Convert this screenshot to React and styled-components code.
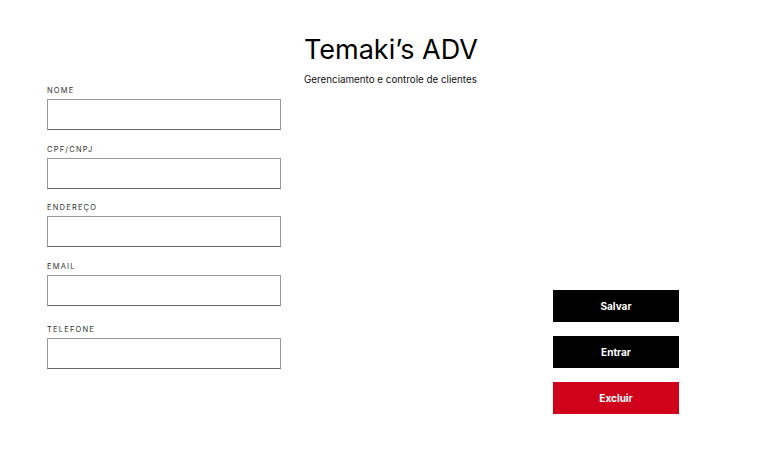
import React from "react";
import styled, { createGlobalStyle } from "styled-components";

const fields = [
  { label: "NOME" },
  { label: "CPF/CNPJ" },
  { label: "ENDEREÇO" },
  { label: "EMAIL" },
  { label: "TELEFONE", spaced: true },
];

const App = () => {
  return (
    <>
      <GlobalStyle />
      <Page>
        <Header>
          <Title>Temaki’s ADV</Title>
          <Subtitle>Gerenciamento e controle de clientes</Subtitle>
        </Header>
        <Main>
          <Form>
            {fields.map((f) => (
              <Field key={f.label} spaced={f.spaced}>
                <Label>{f.label}</Label>
                <Input type="text" />
              </Field>
            ))}
          </Form>
          <Actions>
            <Button>Salvar</Button>
            <Button>Entrar</Button>
            <Button danger>Excluir</Button>
          </Actions>
        </Main>
      </Page>
    </>
  );
};

const GlobalStyle = createGlobalStyle`
  body {
    margin: 0;
    background: #fff;
    font-family: Inter, "Noto Sans", sans-serif;
  }
`;

const Page = styled.div`
  width: 781px;
  height: 453px;
  box-sizing: border-box;
  padding-top: 31px;
`;

const Header = styled.header`
  width: 173px;
  margin: 0 auto;
`;

const Title = styled.h1`
  margin: 0;
  font-size: 27px;
  font-weight: 400;
  line-height: 38px;
  color: #000;
  white-space: nowrap;
`;

const Subtitle = styled.p`
  margin: 5px 0 0;
  font-size: 9.8px;
  line-height: 12px;
  color: #111;
  white-space: nowrap;
`;

const Main = styled.div`
  display: flex;
  justify-content: space-between;
  padding: 0 102px 0 47px;
`;

const Form = styled.form`
  display: flex;
  flex-direction: column;
  gap: 14.6px;
`;

const Field = styled.div`
  display: flex;
  flex-direction: column;
  gap: 4px;
  margin-top: ${(p) => (p.spaced ? "5px" : "0")};
`;

const Label = styled.label`
  font-size: 7.5px;
  letter-spacing: 1.2px;
  color: #333;
  line-height: 9px;
`;

const Input = styled.input`
  box-sizing: border-box;
  width: 234px;
  height: 31px;
  border: 1px solid #999;
  border-bottom-color: #666;
  background: #fff;
  outline: none;
`;

const Actions = styled.div`
  display: flex;
  flex-direction: column;
  gap: 14px;
  margin-top: 204px;
`;

const Button = styled.button`
  width: 126px;
  height: 32px;
  border: none;
  background: ${(p) => (p.danger ? "#d0021b" : "#000")};
  color: #fff;
  font-family: Inter, "Noto Sans", sans-serif;
  font-size: 10px;
  font-weight: 700;
  cursor: pointer;
`;

export default App;
